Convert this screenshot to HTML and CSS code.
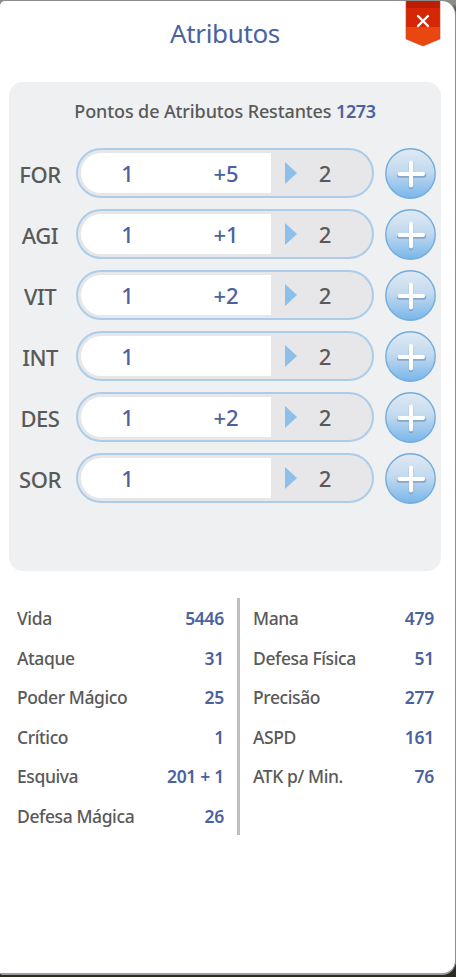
FILE: index.html
```html
<!DOCTYPE html>
<html lang="pt-BR">
<head>
<meta charset="utf-8">
<title>Atributos</title>
<link rel="stylesheet" href="styles.css">
</head>
<body>
<main class="window">
  <h1 class="title">Atributos</h1>
  <button class="close" aria-label="Fechar">
    <svg width="36" height="46" viewBox="0 0 36 46">
      <path d="M1 0H35V38L18 45L1 38Z" fill="#e8480f"/>
      <path d="M1 0H35V26H1Z" fill="#d52705"/>
      <path d="M1 0H35V7H1Z" fill="#bd1d04"/>
      <path d="M1 0V38L18 45L35 38V0" fill="none" stroke="#b8492c" stroke-opacity=".6"/>
      <path d="M13 15L23 25M23 15L13 25" stroke="#fff" stroke-width="2.4" stroke-linecap="round"/>
    </svg>
  </button>
  <svg class="defs" width="0" height="0">
    <defs>
      <linearGradient id="ball" x1="0" y1="0" x2="0" y2="1">
        <stop offset="0" stop-color="#e0e9f3"/>
        <stop offset=".45" stop-color="#c3daef"/>
        <stop offset="1" stop-color="#78b6ea"/>
      </linearGradient>
      <symbol id="plus" viewBox="0 0 51 51">
        <circle cx="25.5" cy="25.5" r="24.7" fill="url(#ball)" stroke="#74acdc" stroke-width="1.4"/>
        <path d="M26 15V39M14 27.5H39" stroke="#7798bf" stroke-width="4.4" stroke-linecap="round" opacity=".75"/>
        <path d="M26 14.5V37.5M14.5 26H38" stroke="#fff" stroke-width="4" stroke-linecap="round"/>
      </symbol>
    </defs>
  </svg>
  <section class="panel">
    <p class="points">Pontos de Atributos Restantes <b>1273</b></p>
    <div class="row"><span class="name">FOR</span><div class="pill"><div class="value"><span class="base">1</span><span class="bonus">+5</span></div><i class="arrow"></i><span class="cost">2</span></div><button class="add" aria-label="FOR"><svg width="51" height="51"><use href="#plus"/></svg></button></div>
    <div class="row"><span class="name">AGI</span><div class="pill"><div class="value"><span class="base">1</span><span class="bonus">+1</span></div><i class="arrow"></i><span class="cost">2</span></div><button class="add" aria-label="AGI"><svg width="51" height="51"><use href="#plus"/></svg></button></div>
    <div class="row"><span class="name">VIT</span><div class="pill"><div class="value"><span class="base">1</span><span class="bonus">+2</span></div><i class="arrow"></i><span class="cost">2</span></div><button class="add" aria-label="VIT"><svg width="51" height="51"><use href="#plus"/></svg></button></div>
    <div class="row"><span class="name">INT</span><div class="pill"><div class="value"><span class="base">1</span></div><i class="arrow"></i><span class="cost">2</span></div><button class="add" aria-label="INT"><svg width="51" height="51"><use href="#plus"/></svg></button></div>
    <div class="row"><span class="name">DES</span><div class="pill"><div class="value"><span class="base">1</span><span class="bonus">+2</span></div><i class="arrow"></i><span class="cost">2</span></div><button class="add" aria-label="DES"><svg width="51" height="51"><use href="#plus"/></svg></button></div>
    <div class="row"><span class="name">SOR</span><div class="pill"><div class="value"><span class="base">1</span></div><i class="arrow"></i><span class="cost">2</span></div><button class="add" aria-label="SOR"><svg width="51" height="51"><use href="#plus"/></svg></button></div>
  </section>
  <section class="stats">
    <dl class="column left">
      <div><dt>Vida</dt><dd>5446</dd></div>
      <div><dt>Ataque</dt><dd>31</dd></div>
      <div><dt>Poder Mágico</dt><dd>25</dd></div>
      <div><dt>Crítico</dt><dd>1</dd></div>
      <div><dt>Esquiva</dt><dd>201 + 1</dd></div>
      <div><dt>Defesa Mágica</dt><dd>26</dd></div>
    </dl>
    <dl class="column right">
      <div><dt>Mana</dt><dd>479</dd></div>
      <div><dt>Defesa Física</dt><dd>51</dd></div>
      <div><dt>Precisão</dt><dd>277</dd></div>
      <div><dt>ASPD</dt><dd>161</dd></div>
      <div><dt>ATK p/ Min.</dt><dd>76</dd></div>
    </dl>
  </section>
</main>
</body>
</html>
```
FILE: styles.css
```css
* { box-sizing: border-box; margin: 0; padding: 0; }
body {
  height: 977px;
  padding-top: 1px;
  overflow: hidden;
  background: linear-gradient(#8b8e88 0 4px, #2b2b1e 12px 100%);
  font-family: "Noto Sans", "Open Sans", sans-serif;
  color: #595959;
}
.window {
  position: relative;
  width: 456px;
  height: 974px;
  background: #fff;
  border-right: 1px solid #8d8d8d;
  border-bottom: 2px solid #9a9ea2;
  border-radius: 5px 14px 14px 2px;
}
.title {
  padding-top: 12px;
  height: 81px;
  width: 450px;
  font-size: 26px;
  line-height: 40px;
  font-weight: 400;
  letter-spacing: -.35px;
  text-align: center;
  color: #4a62a0;
}
button { border: 0; background: none; }
svg { display: block; }
.defs { position: absolute; }
.close { position: absolute; left: 405px; top: 0; }
.panel {
  width: 432px;
  height: 489px;
  margin-left: 9px;
  padding-top: 13px;
  border-radius: 14px;
  background: #eef0f2;
}
.points {
  height: 53px;
  line-height: 32px;
  font-size: 18px;
  font-weight: 500;
  letter-spacing: -.12px;
  text-align: center;
}
.points b { font-weight: 600; letter-spacing: -.4px; color: #4a62a0; }
.row { display: flex; align-items: center; height: 51px; margin-bottom: 10px; font-size: 22px; font-weight: 500; }
.name { width: 62px; margin-right: 5px; text-align: center; letter-spacing: -.5px; }
.pill {
  display: flex;
  align-items: center;
  width: 298px;
  height: 50px;
  margin-bottom: 1px;
  padding-left: 3px;
  border: 2px solid #accdea;
  border-radius: 25px;
  background: #e7e7e9;
}
.value {
  display: flex;
  flex: none;
  align-items: center;
  width: 190px;
  height: 40px;
  border-radius: 20px 0 0 20px;
  background: #fff;
  color: #4a62a0;
}
.base { flex: none; width: 93px; text-align: center; }
.bonus { flex: none; width: 104px; text-align: center; }
.arrow {
  margin-left: 14px;
  border: 11px solid transparent;
  border-left: 12px solid #8dbfeb;
  border-right: 0;
}
.cost { width: 56px; text-align: center; }
.add { margin-left: 11px; width: 51px; height: 51px; }
.stats { display: flex; height: 237px; margin-top: 27px; padding-left: 17px; font-size: 17.5px; font-weight: 500; }
.column { padding-top: 1px; }
.column div { display: flex; justify-content: space-between; height: 39.5px; line-height: 39.5px; white-space: nowrap; }
.column dt { letter-spacing: -.4px; }
.column dd { letter-spacing: -.3px; color: #4a62a0; font-weight: 600; }
.left { width: 223px; padding-right: 13px; border-right: 3px solid #bfbfbf; }
.right { width: 194px; padding-left: 13px; }
```
